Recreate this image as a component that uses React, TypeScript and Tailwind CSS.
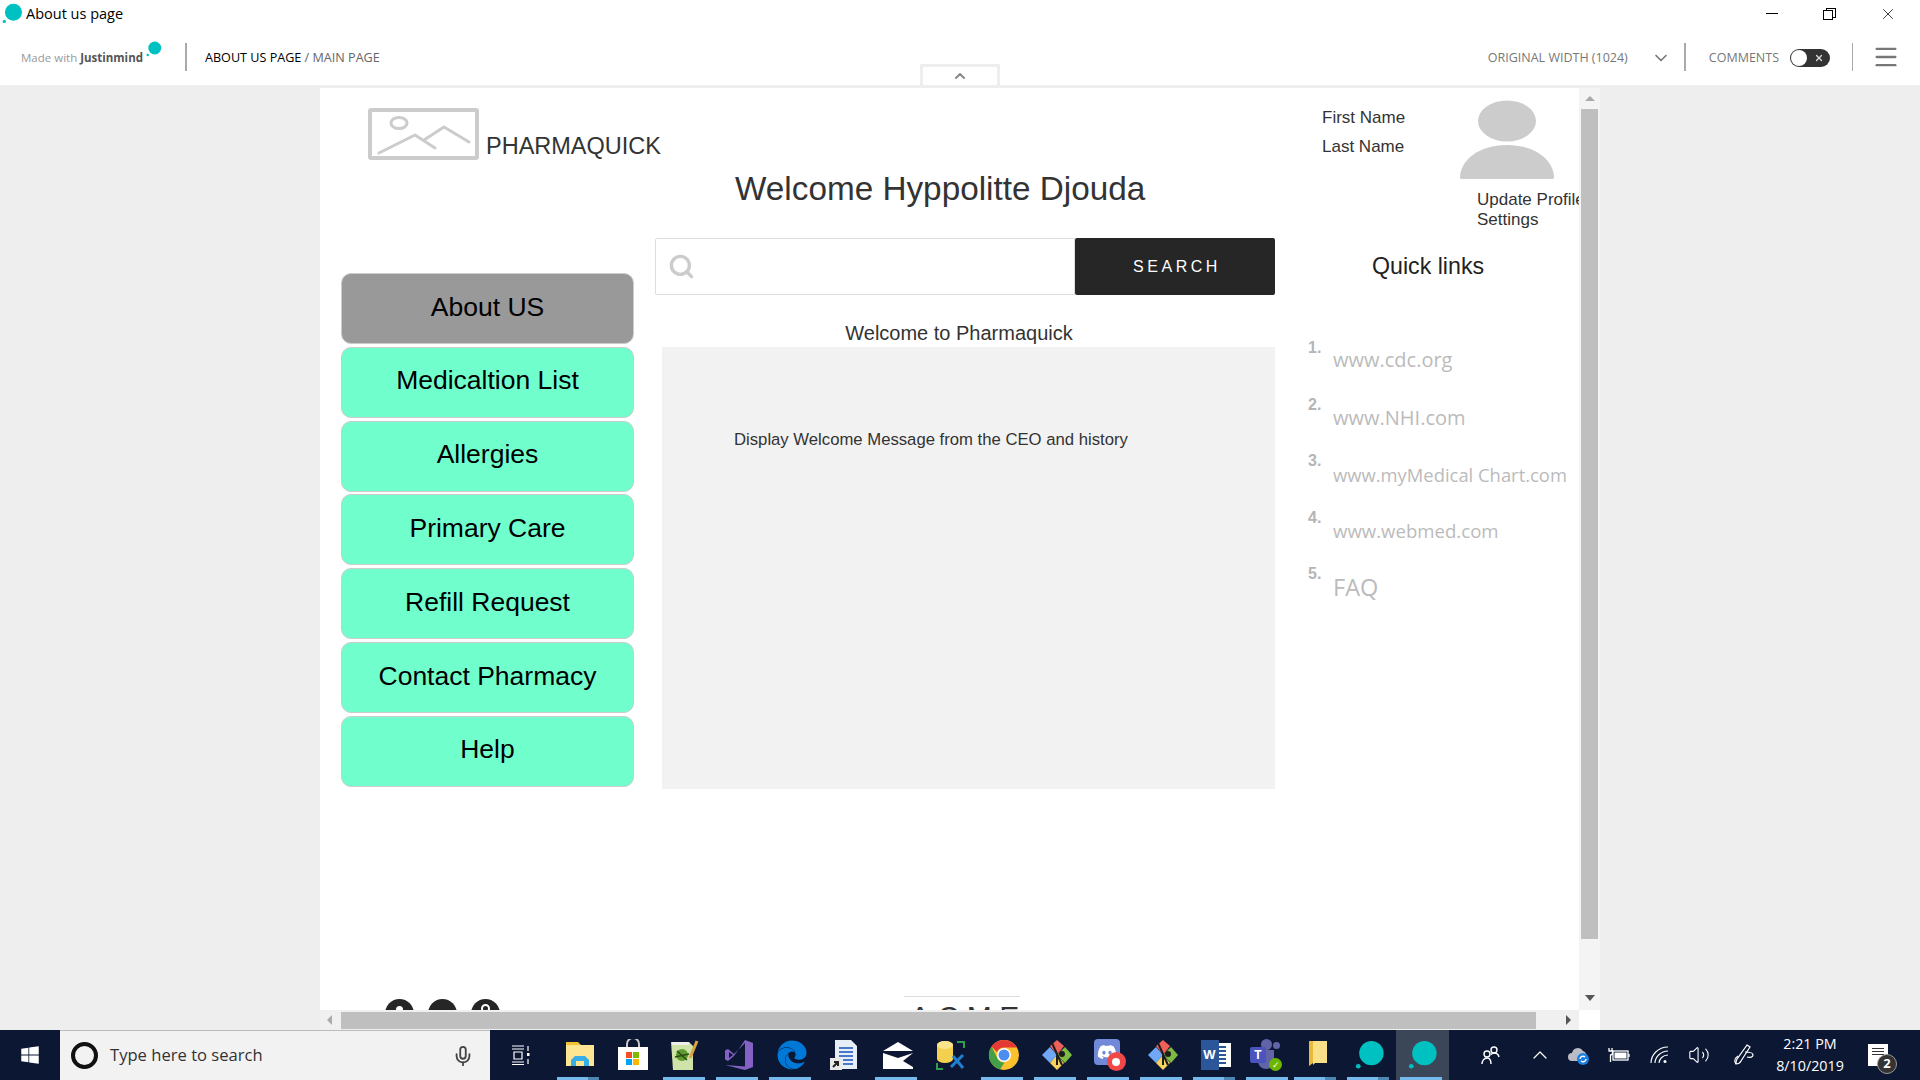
import { ChevronDown, ChevronUp, Menu, Mic, Search, Volume2, X } from "lucide-react";
import { FaDiscord, FaEdge, FaWindows } from "react-icons/fa";
import type { ReactNode } from "react";

const navItems = ["About US", "Medicaltion List", "Allergies", "Primary Care", "Refill Request", "Contact Pharmacy", "Help"];

const quickLinks = [
  { label: "www.cdc.org", cls: "pt-[1px] text-[20px] leading-[46px]" },
  { label: "www.NHI.com", cls: "pt-[2px] text-[20px] leading-[46px]" },
  { label: "www.myMedical Chart.com", cls: "pt-[3px] text-[18.4px] leading-[46px]" },
  { label: "www.webmed.com", cls: "pt-[2px] text-[18.6px] leading-[46px]" },
  { label: "FAQ", cls: "text-[23.5px] leading-[51px]" },
];

function JmLogo({ size = 32, color = "#00c1c1" }: { size?: number; color?: string }) {
  return (
    <svg width={size} height={size} viewBox="0 0 32 32">
      <circle cx="17.5" cy="14" r="13" fill={color} />
      <circle cx="3.5" cy="28" r="2.5" fill={color} />
    </svg>
  );
}

function Folder({ plain }: { plain?: boolean }) {
  if (plain) {
    return (
      <svg width="32" height="32" viewBox="0 0 32 32">
        <path d="M8 2h12v22H12l-4 3z" fill="#e9b93c" />
        <path d="M12 2h14v22H14l-2 2z" fill="#fbe08a" />
      </svg>
    );
  }
  return (
    <svg width="32" height="32" viewBox="0 0 32 32">
      <path d="M2 3h12l3 3H2z" fill="#f2c230" />
      <rect x="2" y="6" width="28" height="21" fill="#fde591" />
      <path d="M7 27v-6l4-4h10l4 4v6h-5v-5h-8v5z" fill="#38aee8" />
    </svg>
  );
}

function Store() {
  return (
    <svg width="32" height="32" viewBox="0 0 32 32">
      <path d="M10 8V5a5 5 0 0 1 12 0v3" fill="none" stroke="#c9c9c9" strokeWidth="2" />
      <rect x="1" y="8" width="30" height="23" fill="#fff" />
      <rect x="9" y="13" width="6" height="6" fill="#f25022" />
      <rect x="16" y="13" width="6" height="6" fill="#7fba00" />
      <rect x="9" y="20" width="6" height="6" fill="#00a4ef" />
      <rect x="16" y="20" width="6" height="6" fill="#ffb900" />
    </svg>
  );
}

function NotepadPlus() {
  return (
    <svg width="32" height="32" viewBox="0 0 32 32">
      <path d="M1 3h18l4 4v24H3z" fill="#cfe3a8" />
      <rect x="2" y="3" width="17" height="3" fill="#eee" />
      <circle cx="12" cy="16" r="6" fill="#5f9c2f" />
      <path d="M5 18l14-3M7 12l10 9" stroke="#2c4a16" strokeWidth="1.5" />
      <path d="M20 19L27 2" stroke="#d9a441" strokeWidth="3" />
    </svg>
  );
}

function VisualStudio() {
  return (
    <svg width="32" height="32" viewBox="0 0 32 32">
      <path d="M22 1l8 3v24l-8 3-20-5 20 1.500V4L11 15 5 10 2 11.500v9L5 22l6-5" fill="#8661c5" />
      <path d="M6 13v6l4-3z M14 16l8 6V10z" fill="#0c1833" />
    </svg>
  );
}

function Doc() {
  return (
    <svg width="32" height="32" viewBox="0 0 32 32">
      <path d="M6 1h16l6 6v23H6z" fill="#e8eef8" />
      <path d="M10 9h14M10 13h14M10 17h14M14 21h10M14 25h10" stroke="#4a78c9" strokeWidth="2" />
      <rect x="1" y="19" width="12" height="12" fill="#e8e8e8" />
      <path d="M4 28l5-5M5 23h4v4" stroke="#222" strokeWidth="2" fill="none" />
    </svg>
  );
}

function Mail() {
  return (
    <svg width="32" height="32" viewBox="0 0 32 32">
      <path d="M1 12L16 3l15 9z" fill="#fff" />
      <path d="M1 14l15 5 15-5-10 8 10 6v2H1z" fill="#fff" />
    </svg>
  );
}

function Database() {
  return (
    <svg width="32" height="32" viewBox="0 0 32 32">
      <path d="M2 6a8 4 0 0 1 16 0v14a8 4 0 0 1-16 0z" fill="#f3d04e" />
      <ellipse cx="10" cy="6" rx="8" ry="4" fill="#fbe48c" />
      <path d="M22 3h7v6M2 24v6h6" fill="none" stroke="#2e9e4f" strokeWidth="2" />
      <path d="M16 28L28 16M18 17l10 12" stroke="#1f7fd1" strokeWidth="3" />
    </svg>
  );
}

function Chrome() {
  return (
    <svg width="32" height="32" viewBox="0 0 32 32">
      <circle cx="16" cy="16" r="15" fill="#fbc02d" />
      <path d="M16 1a15 15 0 0 1 13 7.500H16a7.500 7.500 0 0 0-7 4.500L3.500 7.500A15 15 0 0 1 16 1z" fill="#e53935" />
      <path d="M3.500 7.500L9.500 19.500a7.500 7.500 0 0 0 7 4L12 30.500A15 15 0 0 1 3.500 7.500z" fill="#43a047" />
      <circle cx="16" cy="16" r="7" fill="#fff" />
      <circle cx="16" cy="16" r="5.500" fill="#4a8ef0" />
    </svg>
  );
}

function Diamonds() {
  return (
    <svg width="32" height="32" viewBox="0 0 32 32">
      <path d="M1 16l8-8 7 8-7 8z" fill="#6ea8f7" />
      <path d="M16 16l8-8 7 8-7 8z" fill="#7dbb42" />
      <path d="M9 24l7-8 7 8-7 7z" fill="#f7d35c" />
      <path d="M9 7l7-6 7 6-7 9z" fill="#f0605a" />
      <path d="M11 4l10 22M16 16v10" stroke="#1d1d1d" strokeWidth="2" />
      <circle cx="21" cy="15" r="3" fill="#1d1d1d" />
    </svg>
  );
}

function Discord() {
  return (
    <div className="relative h-[32px] w-[32px]">
      <div className="flex h-[26px] w-[26px] items-center justify-center rounded-[4px] bg-[#7289da]">
        <FaDiscord size={20} color="#fff" />
      </div>
      <div className="absolute bottom-0 right-0 flex h-[19px] w-[19px] items-center justify-center rounded-full bg-[#f04747]">
        <div className="h-[8px] w-[8px] rounded-full bg-white" />
      </div>
    </div>
  );
}

function Word() {
  return (
    <div className="relative h-[30px] w-[30px]">
      <div className="absolute right-0 top-[3px] flex h-[24px] w-[20px] flex-col justify-center gap-[2px] bg-white px-[5px]">
        {[0, 1, 2, 3, 4].map((i) => (
          <div key={i} className="h-[2px] bg-[#2b579a]" />
        ))}
      </div>
      <div className="absolute left-0 top-0 flex h-[30px] w-[18px] items-center justify-center bg-[#2b579a] font-['Liberation_Sans',sans-serif] text-[13px] font-bold text-white">
        W
      </div>
    </div>
  );
}

function Teams() {
  return (
    <div className="relative h-[32px] w-[32px]">
      <div className="absolute left-[11px] top-0 h-[11px] w-[11px] rounded-full bg-[#6264a7]" />
      <div className="absolute right-[2px] top-[3px] h-[7px] w-[7px] rounded-full bg-[#6264a7]" />
      <div className="absolute bottom-[2px] left-[8px] h-[19px] w-[16px] rounded-b-full bg-[#6264a7]" />
      <div className="absolute left-0 top-[8px] flex h-[16px] w-[16px] items-center justify-center rounded-[2px] bg-[#4b53bc] font-['Liberation_Sans',sans-serif] text-[12px] font-bold text-white">
        T
      </div>
      <div className="absolute bottom-0 right-0 flex h-[13px] w-[13px] items-center justify-center rounded-full bg-[#6bb700] text-[9px] text-white">
        ✓
      </div>
    </div>
  );
}

function People() {
  return (
    <svg width="20" height="20" viewBox="0 0 20 20" fill="none" stroke="#fff" strokeWidth="1.4">
      <circle cx="13" cy="5" r="3" />
      <circle cx="6" cy="9" r="3" />
      <path d="M1 19c0-3 2-6 5-6s4 2 4 6M10 9.500c1-1 2-1.500 3-1.500 2.500 0 4.500 1.500 5 4" />
    </svg>
  );
}

function CloudSync() {
  return (
    <svg width="22" height="22" viewBox="0 0 22 22">
      <path d="M4 17a4 4 0 0 1 0-8 6 6 0 0 1 11-2 5 5 0 0 1 3 7v3z" fill="#b9bcc4" />
      <circle cx="15" cy="15" r="6" fill="#1a7fe0" />
      <path d="M12 15a3 3 0 0 1 5-2M18 15a3 3 0 0 1-5 2" stroke="#fff" strokeWidth="1.400" fill="none" />
    </svg>
  );
}

function Battery() {
  return (
    <svg width="22" height="16" viewBox="0 0 22 16" fill="none" stroke="#fff" strokeWidth="1.300">
      <rect x="5" y="4" width="15" height="9" />
      <rect x="6.500" y="5.500" width="12" height="6" fill="#fff" stroke="none" />
      <path d="M21 7v3" />
      <path d="M1 1v3M4 1v3M0.500 4h4v2c0 1-1 2-2 2v7" />
    </svg>
  );
}

function Wifi() {
  return (
    <svg width="20" height="18" viewBox="0 0 20 18" fill="none" stroke="#fff" strokeWidth="1.100">
      <path d="M1 17C1 9 8 1 18 1M5 17c0-6 6-12 13-12M9 17c0-4 4-8 9-8" />
      <circle cx="15" cy="15.500" r="1.500" fill="#fff" stroke="none" />
    </svg>
  );
}

function PenScribble() {
  return (
    <svg width="22" height="22" viewBox="0 0 22 22" fill="none" stroke="#fff" strokeWidth="1.200">
      <path d="M14 1l3 2-9 14c-1 2-3 3-5 3 0-2 0-4 1-5z" />
      <path d="M3 20c-2-3-1-6 2-8M12 8c4 0 8 1 8 3s-3 3-6 2" />
    </svg>
  );
}

const taskApps: { icon: ReactNode; state: "none" | "open" | "multi" | "active"; narrow?: boolean }[] = [
  { icon: <Folder />, state: "multi" },
  { icon: <Store />, state: "none" },
  { icon: <NotepadPlus />, state: "open" },
  { icon: <VisualStudio />, state: "open" },
  { icon: <FaEdge size={30} color="#0078d7" />, state: "open" },
  { icon: <Doc />, state: "none" },
  { icon: <Mail />, state: "open" },
  { icon: <Database />, state: "none" },
  { icon: <Chrome />, state: "open" },
  { icon: <Diamonds />, state: "open" },
  { icon: <Discord />, state: "open" },
  { icon: <Diamonds />, state: "open" },
  { icon: <Word />, state: "multi" },
  { icon: <Teams />, state: "open", narrow: true },
  { icon: <Folder plain />, state: "multi" },
  { icon: <JmLogo size={30} />, state: "multi" },
  { icon: <JmLogo size={30} />, state: "active" },
];

function TaskIcon({ icon, state, narrow }: { icon: ReactNode; state: string; narrow?: boolean }) {
  return (
    <div className={`relative flex h-full items-center justify-center ${narrow ? "w-[48px]" : "w-[53px]"} ${state === "active" ? "bg-[#3b4658]" : ""}`}>
      {icon}
      {state !== "none" && (
        <div className="absolute bottom-0 left-[4px] flex h-[3px] w-[42px]">
          <div className="flex-1 bg-[#76b9ed]" />
          {state === "multi" && <div className="w-[11px] bg-[#4d86b3]" />}
        </div>
      )}
    </div>
  );
}

function Taskbar() {
  return (
    <div className="flex h-[50px] shrink-0 items-stretch bg-[#0c1833] font-['Open_Sans',sans-serif]">
      <div className="flex w-[60px] items-center justify-center">
        <FaWindows size={20} color="#fff" />
      </div>
      <div className="flex w-[430px] items-center border-t border-[#bbb] bg-[#f2f2f2] pl-[11px] pr-[16px]">
        <div className="h-[27px] w-[27px] rounded-full border-4 border-[#111] bg-transparent" />
        <span className="ml-[12px] flex-1 text-[16.6px] text-[#333]">Type here to search</span>
        <Mic size={22} color="#444" />
      </div>
      <div className="flex w-[63px] items-center justify-center">
        <svg width="22" height="22" viewBox="0 0 22 22" fill="none" stroke="#fff" strokeWidth="1.200">
          <path d="M1 2h12M1 5h12M3 8h8v7H3zM1 18h12M1 20.500h12M17 2v5M17 15v5" />
          <rect x="16" y="9" width="2.500" height="3" fill="#fff" stroke="none" />
        </svg>
      </div>
      {taskApps.map((app, i) => (
        <TaskIcon key={i} icon={app.icon} state={app.state} narrow={app.narrow} />
      ))}
      <div className="flex flex-1 items-center text-white">
        <div className="ml-[32px] w-[40px]"><People /></div>
        <ChevronUp size={24} strokeWidth={1.2} className="ml-[7px]" />
        <div className="ml-[16px]"><CloudSync /></div>
        <div className="ml-[18px]"><Battery /></div>
        <div className="ml-[20px]"><Wifi /></div>
        <Volume2 size={22} strokeWidth={1.2} className="ml-[18px]" />
        <div className="ml-[23px]"><PenScribble /></div>
        <div className="ml-[17px] w-[76px] text-center text-[14.3px] leading-[22px]">
          <div>2:21 PM</div>
          <div>8/10/2019</div>
        </div>
        <div className="relative ml-[20px] h-[22px] w-[20px] bg-white p-[4px]">
          <div className="mb-[2px] h-[1px] bg-[#333]" />
          <div className="mb-[2px] h-[1px] bg-[#333]" />
          <div className="h-[1px] bg-[#333]" />
          <div className="absolute -bottom-[8px] -right-[9px] flex h-[20px] w-[20px] items-center justify-center rounded-full border border-[#999] bg-[#333] text-[13px] font-bold">
            2
          </div>
        </div>
      </div>
    </div>
  );
}

function Toolbar() {
  return (
    <>
      <div className="flex h-[29px] items-center justify-between pb-[2px] pl-[2px] pr-[3px] font-['Open_Sans',sans-serif]">
        <div className="flex items-center gap-[3px]">
          <JmLogo size={21} />
          <span className="text-[14.5px] text-black">About us page</span>
        </div>
        <div className="flex items-center text-black">
          <div className="flex w-[58px] justify-center"><div className="h-[1px] w-[12px] bg-black" /></div>
          <div className="relative h-[12px] w-[58px]">
            <div className="absolute left-[25px] top-0 h-[10px] w-[10px] border border-black" />
            <div className="absolute left-[22px] top-[2px] h-[10px] w-[10px] border border-black bg-white" />
          </div>
          <div className="flex w-[58px] justify-center"><X size={18} strokeWidth={1} /></div>
        </div>
      </div>
      <div className="relative flex h-[56px] items-center pt-[2px] font-['Open_Sans',sans-serif]">
        <div className="relative flex w-[185px] items-center pl-[21px] text-[11.5px] text-[#999]">
          Made with
          <span className="ml-[3px] font-bold text-[#555]">Justinmind</span>
          <div className="absolute left-[146px] -top-[8px]"><JmLogo size={16} /></div>
        </div>
        <div className="-mt-[2px] h-[28px] w-[2px] bg-[#aaa]" />
        <div className="ml-[18px] flex-1 text-[12.6px] text-[#666]">
          <span className="text-black">ABOUT US PAGE</span> / MAIN PAGE
        </div>
        <span className="text-[12.5px] text-[#777]">ORIGINAL WIDTH (1024)</span>
        <ChevronDown size={20} color="#777" className="ml-[23px]" />
        <div className="-mt-[2px] ml-[13px] h-[28px] w-[2px] bg-[#aaa]" />
        <span className="ml-[23px] text-[12.5px] text-[#777]">COMMENTS</span>
        <div className="ml-[11px] flex h-[18px] w-[40px] items-center rounded-full bg-[#333] pl-[1px]">
          <div className="h-[16px] w-[16px] rounded-full bg-white" />
          <X size={10} color="#ddd" strokeWidth={3} className="ml-[7px]" />
        </div>
        <div className="-mt-[2px] ml-[22px] h-[28px] w-[1px] bg-[#aaa]" />
        <Menu size={28} color="#777" className="-mt-[2px] ml-[19px] mr-[20px]" />
        <div className="absolute bottom-0 left-[920px] flex h-[21px] w-[80px] items-center justify-center border-x-[3px] border-t-[3px] border-[#eee] bg-white">
          <ChevronUp size={16} color="#888" strokeWidth={3} />
        </div>
      </div>
    </>
  );
}

function Header() {
  return (
    <div className="flex h-[150px]">
      <div className="w-[1002px] shrink-0 pl-[48px] pt-[20px]">
        <div className="flex items-end">
          <svg width="111" height="52" viewBox="0 0 111 52" fill="none" stroke="#ccc">
            <rect x="2" y="2" width="107" height="48" rx="1" strokeWidth="4" />
            <ellipse cx="31" cy="15" rx="8" ry="5.500" strokeWidth="3" />
            <path d="M11 45L47 27L67 40M56 32L76 19L101 34" strokeWidth="3" strokeLinecap="round" strokeLinejoin="round" />
          </svg>
          <span className="ml-[7px] text-[23.5px] leading-[28px] text-[#333]">PHARMAQUICK</span>
        </div>
        <h1 className="ml-[367px] mt-[9px] whitespace-nowrap text-[33.3px] leading-[40px] text-[#333]">Welcome Hyppolitte Djouda</h1>
      </div>
      <div className="flex w-[257px] overflow-hidden">
        <div className="w-[137px] shrink-0 pt-[15px] text-[17px] leading-[29px] text-[#333]">
          <div>First Name</div>
          <div>Last Name</div>
        </div>
        <div className="shrink-0 pt-[12px]">
          <svg width="96" height="80" viewBox="0 0 96 80" fill="#ccc">
            <ellipse cx="48" cy="21" rx="29" ry="20.500" />
            <path d="M1 78C1 60 20 45 48 45s47 15 47 33q0 1-2 1H3q-2 0-2-1z" />
          </svg>
          <div className="ml-[18px] whitespace-nowrap pt-[10px] text-[17px] leading-[20px] text-[#333]">
            <div>Update Profile</div>
            <div>Settings</div>
          </div>
        </div>
      </div>
    </div>
  );
}

function Body() {
  return (
    <div className="flex">
      <nav className="ml-[21px] mt-[35px] flex w-[293px] shrink-0 flex-col gap-[2.8px]">
        {navItems.map((item, i) => (
          <div
            key={item}
            className={`flex h-[71px] items-center justify-center rounded-[10px] border border-[#ccc] pb-[2px] text-[26.5px] text-black ${i === 0 ? "bg-[#999999]" : "bg-[#70ffcc]"}`}
          >
            {item}
          </div>
        ))}
      </nav>
      <div className="ml-[21px] w-[620px] shrink-0">
        <div className="flex h-[57px]">
          <div className="flex flex-1 items-center rounded-l-[2px] border border-[#ddd] pl-[12px]">
            <Search size={27} color="#ccc" strokeWidth={3} />
          </div>
          <div className="flex w-[200px] items-center justify-center rounded-[2px] bg-[#262626] pl-[4px] text-[16px] tracking-[0.22em] text-white">
            SEARCH
          </div>
        </div>
        <div className="pr-[12px] pt-[26px] text-center text-[20px] leading-[25px] text-[#333]">Welcome to Pharmaquick</div>
        <div className="ml-[7px] mt-[1px] h-[442px] bg-[#f2f2f2] pl-[72px] pt-[83px] text-[16.7px] leading-[20px] text-[#333]">
          Display Welcome Message from the CEO and history
        </div>
      </div>
      <div className="min-w-0 flex-1 pl-[33px]">
        <div className="pl-[64px] pt-[12px] text-[23.2px] leading-[32px] text-[#222]">Quick links</div>
        <ol className="pt-[54px]">
          {quickLinks.map((link, i) => (
            <li key={link.label} className="flex h-[56.6px] items-start">
              <span className="w-[25px] pt-[2px] text-[16px] font-bold leading-[20px] text-[#b5b5b5]">{i + 1}.</span>
              <span className={`whitespace-nowrap font-['Open_Sans',sans-serif] text-[#bbb] ${link.cls}`}>
                {link.label}
              </span>
            </li>
          ))}
        </ol>
      </div>
    </div>
  );
}

function Footer() {
  return (
    <div className="mt-[207px] flex h-[60px]">
      <div className="ml-[65px] flex w-[519px] gap-[14px] pt-[3px]">
        {[0, 1, 2].map((i) => (
          <div key={i} className="relative h-[29px] w-[29px] rounded-full bg-[#262626]">
            {i === 0 && <div className="absolute left-[11px] top-[7px] h-[7px] w-[7px] rounded-full bg-white" />}
            {i === 2 && <div className="absolute left-[10px] top-[5px] h-[9px] w-[9px] rounded-full border-2 border-white" />}
          </div>
        ))}
      </div>
      <div className="w-[116px]">
        <div className="h-[1px] bg-[#ddd]" />
        <div className="pl-[6px] pt-[2px] text-[30px] leading-[36px] tracking-[0.25em] text-[#333]">ACME</div>
      </div>
    </div>
  );
}

export default function App() {
  return (
    <div className="flex h-screen w-full flex-col overflow-hidden bg-white font-['Liberation_Sans',sans-serif]">
      <Toolbar />
      <div className="flex min-h-0 flex-1 bg-[#eeeeee] pt-[3px]">
        <div className="ml-[320px] flex w-[1280px] flex-col">
          <div className="flex min-h-0 flex-1">
            <div className="w-[1259px] overflow-hidden bg-white">
              <Header />
              <Body />
              <Footer />
            </div>
            <div className="flex w-[21px] flex-col items-center bg-[#f4f4f4] pt-[8px]">
              <div className="h-0 w-0 border-x-[5px] border-b-[5px] border-x-transparent border-b-[#aaa]" />
              <div className="mt-[8px] h-[830px] w-[17px] bg-[#bfbfbf]" />
              <div className="mt-[56px] h-0 w-0 border-x-[5px] border-t-[6px] border-x-transparent border-t-[#555]" />
            </div>
          </div>
          <div className="flex h-[20px] shrink-0 items-center">
            <div className="flex h-full w-[1259px] items-center bg-[#f0f0f0]">
              <div className="ml-[7px] h-0 w-0 border-y-[5px] border-r-[5px] border-y-transparent border-r-[#aaa]" />
              <div className="ml-[9px] h-[17px] w-[1195px] bg-[#bfbfbf]" />
              <div className="ml-[30px] h-0 w-0 border-y-[5px] border-l-[5px] border-y-transparent border-l-[#555]" />
            </div>
            <div className="h-full flex-1 bg-white" />
          </div>
        </div>
      </div>
      <Taskbar />
    </div>
  );
}
